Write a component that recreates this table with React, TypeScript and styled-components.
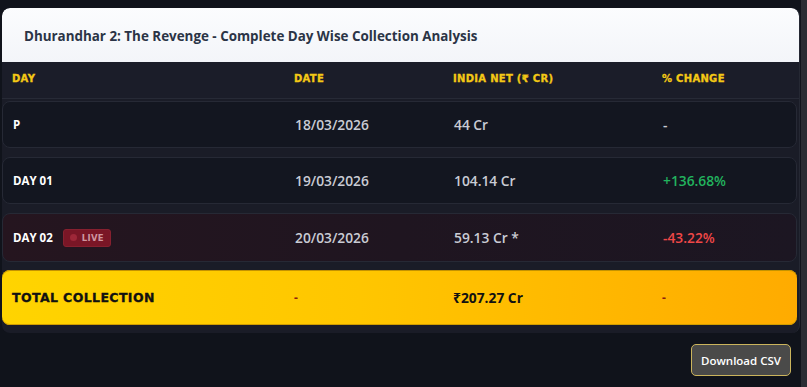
import React from 'react'
import styled, { createGlobalStyle } from 'styled-components'

const GlobalStyle = createGlobalStyle`
    html, body {
        margin: 0;
        padding: 0;
        background: #10131b;
    }
    body {
        font-family: 'Open Sans', 'Noto Sans', sans-serif;
    }
`

const Page = styled.div`
    min-height: 387px;
    box-sizing: border-box;
    border-right: 6px solid #2a2c33;
    padding: 8px 1px 10px 2px;
    display: flex;
    flex-direction: column;
`

const Card = styled.div`
    background: #1a1c27;
    border-radius: 8px;
    border-right: 1px solid #252833;
    padding-bottom: 8px;
    overflow: hidden;
`

const Title = styled.div`
    background: linear-gradient(180deg, #fbfcfe, #f3f5f9);
    border-radius: 8px 8px 0 0;
    height: 54px;
    display: flex;
    align-items: center;
    padding: 2px 22px 0;
    box-sizing: border-box;
    font-size: 13.4px;
    font-weight: 700;
    color: #2b3446;
`

const Grid = styled.div<{ $h: number }>`
    display: grid;
    grid-template-columns: 282px 159px 209px 1fr;
    align-items: center;
    height: ${p => p.$h}px;
    box-sizing: border-box;
    & > div {
        padding-left: 10px;
    }
`

const HeadRow = styled(Grid)`
    background: #1b1d29;
    border-bottom: 1px solid #272a36;
    padding-bottom: 3px;
`

const HeadCell = styled.div`
    font-family: 'DejaVu Sans', Verdana, sans-serif;
    font-weight: 700;
    font-size: 10px;
    letter-spacing: 0.3px;
    color: #f4c915;
    text-transform: uppercase;
    -webkit-text-stroke: 0.3px #f4c915;
`

const Body = styled.div`
    display: flex;
    flex-direction: column;
    gap: 9px;
    padding-top: 2px;
`

const Row = styled(Grid)<{ $live?: boolean }>`
    background: ${p => (p.$live ? 'linear-gradient(90deg, #25151f 0%, #1f1520 50%, #1c1622 100%)' : '#131620')};
    border: 1px solid #262935;
    border-radius: 8px;
    margin-right: 2px;
`

const DayCell = styled.div`
    display: flex;
    align-items: center;
    gap: 10px;
    font-size: 11.5px;
    font-weight: 700;
    color: #ffffff;
`

const Value = styled.div<{ $tone?: 'up' | 'down' }>`
    font-size: 13.8px;
    font-weight: 600;
    color: ${p => (p.$tone === 'up' ? '#22b35e' : p.$tone === 'down' ? '#ef4747' : '#c9cbd4')};
`

const Live = styled.span`
    display: inline-flex;
    align-items: center;
    gap: 5px;
    height: 16px;
    padding: 0 6px 0 6px;
    border-radius: 3px;
    background: #7a1626;
    border: 1px solid #86202f;
    font-family: 'DejaVu Sans', Verdana, sans-serif;
    font-size: 8.5px;
    font-weight: 700;
    letter-spacing: 0.3px;
    color: #cf96a0;
    &::before {
        content: '';
        width: 7px;
        height: 7px;
        border-radius: 50%;
        background: #9e2738;
    }
`

const TotalRow = styled(Grid)`
    background: linear-gradient(90deg, #ffd400 0%, #ffc600 45%, #ffab00 100%);
    border-radius: 8px;
    margin-top: -1px;
    margin-right: 2px;
    box-shadow: 0 1px 0 #c49300 inset, 0 -1px 0 #d09c00 inset;
`

const TotalLabel = styled.div`
    font-family: 'DejaVu Sans', Verdana, sans-serif;
    font-weight: 700;
    font-size: 12.5px;
    letter-spacing: 0.4px;
    color: #111111;
    -webkit-text-stroke: 0.3px #111111;
`

const TotalValue = styled.div`
    font-size: 13.8px;
    font-weight: 700;
    color: #111111;
`

const Dash = styled.div`
    font-size: 12px;
    font-weight: 700;
    color: #8a1d10;
`

const Footer = styled.div`
    display: flex;
    justify-content: flex-end;
    padding: 11px 9px 0 0;
`

const Button = styled.button`
    width: 100px;
    height: 32px;
    background: #4a4a49;
    border: 1px solid #cbb45c;
    border-radius: 5px;
    color: #ffffff;
    font-family: 'Open Sans', 'Noto Sans', sans-serif;
    font-size: 11.5px;
    font-weight: 600;
    cursor: pointer;
`

const rows = [
    { day: 'P', date: '18/03/2026', net: '44 Cr', change: '-', tone: undefined, live: false },
    { day: 'DAY 01', date: '19/03/2026', net: '104.14 Cr', change: '+136.68%', tone: 'up' as const, live: false },
    { day: 'DAY 02', date: '20/03/2026', net: '59.13 Cr *', change: '-43.22%', tone: 'down' as const, live: true },
]

const App = () => {
    return (
        <>
            <GlobalStyle />
            <Page>
                <Card>
                    <Title>Dhurandhar 2: The Revenge - Complete Day Wise Collection Analysis</Title>
                    <HeadRow $h={37}>
                        <HeadCell>Day</HeadCell>
                        <HeadCell>Date</HeadCell>
                        <HeadCell>India Net (₹ Cr)</HeadCell>
                        <HeadCell>% Change</HeadCell>
                    </HeadRow>
                    <Body>
                        {rows.map(r => (
                            <Row key={r.day} $h={r.live ? 49 : 47} $live={r.live}>
                                <DayCell>
                                    {r.day}
                                    {r.live && <Live>LIVE</Live>}
                                </DayCell>
                                <Value>{r.date}</Value>
                                <Value>{r.net}</Value>
                                <Value $tone={r.tone}>{r.change}</Value>
                            </Row>
                        ))}
                        <TotalRow $h={55}>
                            <TotalLabel>TOTAL COLLECTION</TotalLabel>
                            <Dash>-</Dash>
                            <TotalValue>₹207.27 Cr</TotalValue>
                            <Dash>-</Dash>
                        </TotalRow>
                    </Body>
                </Card>
                <Footer>
                    <Button>Download CSV</Button>
                </Footer>
            </Page>
        </>
    )
}

export default App
